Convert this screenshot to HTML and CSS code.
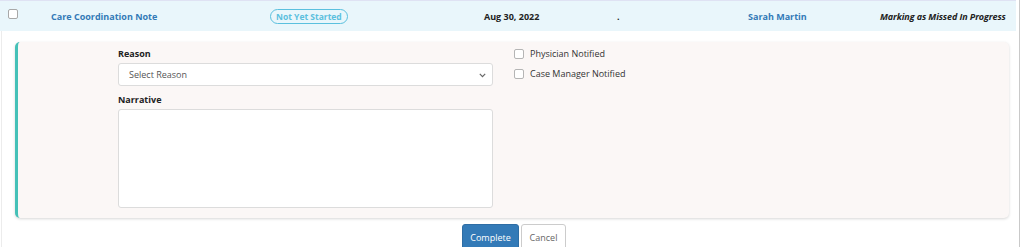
FILE: index.html
```html
<!DOCTYPE html>
<html>
<head>
<meta charset="utf-8">
<link rel="stylesheet" href="styles.css">
</head>
<body>
<div class="page">
  <div class="row">
    <div class="cell cb"><span class="box"></span></div>
    <div class="cell title">Care Coordination Note</div>
    <div class="cell"><span class="badge">Not Yet Started</span></div>
    <div class="cell date">Aug 30, 2022</div>
    <div class="cell dot">.</div>
    <div class="cell name">Sarah Martin</div>
    <div class="cell status">Marking as Missed In Progress</div>
  </div>
  <div class="panel">
    <div class="form">
      <div class="field-col">
        <div class="label">Reason</div>
        <div class="select">
          <span>Select Reason</span>
          <svg class="chev" width="7" height="5" viewBox="0 0 7 5"><path d="M0.8 0.8 L3.5 3.6 L6.2 0.8" fill="none" stroke="#666" stroke-width="1.2"/></svg>
        </div>
        <div class="label narr">Narrative</div>
        <div class="textarea"></div>
      </div>
      <div class="checks">
        <div class="check"><span class="box"></span>Physician Notified</div>
        <div class="check"><span class="box"></span>Case Manager Notified</div>
      </div>
    </div>
  </div>
  <div class="actions">
    <button class="btn primary">Complete</button>
    <button class="btn default">Cancel</button>
  </div>
</div>
</body>
</html>
```
FILE: styles.css
```css
html, body {
  margin: 0;
  padding: 0;
  background: #fff;
  font-family: "Open Sans", "Noto Sans", sans-serif;
  font-size: 9px;
  color: #333;
  overflow: hidden;
}
.page {
  width: 1020px;
  height: 247px;
  box-sizing: border-box;
  border-right: 1px solid #c9c9c9;
  position: relative;
}
.page::before {
  content: "";
  position: absolute;
  left: 1px;
  top: 31px;
  bottom: 0;
  width: 1px;
  background: #ececec;
}
.row {
  height: 31px;
  box-sizing: border-box;
  margin-right: 3px;
  background: #e9f6fb;
  border-top: 1px solid #dfe2f3;
  display: grid;
  grid-template-columns: 51px 219px 214px 133px 131px 132px 1fr;
  align-items: center;
}
.cell {
  white-space: nowrap;
}
.cb {
  padding-left: 8px;
  display: flex;
  align-items: center;
  margin-top: -4px;
}
.box {
  display: inline-block;
  width: 10px;
  height: 10px;
  box-sizing: border-box;
  border: 1px solid #a8a8a8;
  border-radius: 2px;
  background: #fff;
  flex: none;
}
.title, .name {
  color: #337ab7;
  font-weight: 700;
}
.badge {
  display: inline-block;
  border: 1px solid #5bc0de;
  color: #5bc0de;
  border-radius: 8px;
  font-size: 8.5px;
  font-weight: 700;
  padding: 0 5px;
  line-height: 13px;
}
.date {
  font-weight: 700;
  color: #222;
}
.dot {
  color: #222;
  font-weight: 700;
}
.status {
  font-weight: 700;
  font-style: italic;
  color: #222;
  letter-spacing: -0.1px;
}
.panel {
  margin: 11px 0 0 15px;
  width: 994px;
  height: 176px;
  box-sizing: border-box;
  background: #fbf7f6;
  border-left: 3px solid #45c1b8;
  border-radius: 5px;
  box-shadow: 0 1px 3px rgba(0, 0, 0, 0.16);
}
.form {
  display: flex;
  gap: 21px;
  padding: 5px 0 0 100px;
}
.field-col {
  width: 375px;
}
.label {
  font-weight: 700;
  color: #222;
  line-height: 13px;
  margin-bottom: 3px;
}
.narr {
  margin-top: 7px;
  margin-bottom: 3px;
}
.select {
  height: 23px;
  box-sizing: border-box;
  background: #fff;
  border: 1px solid #dcdcdc;
  border-radius: 3px;
  display: flex;
  align-items: center;
  justify-content: space-between;
  padding: 0 6px 0 10px;
  color: #555;
}
.chev {
  margin-top: 1px;
}
.textarea {
  height: 99px;
  box-sizing: border-box;
  background: #fff;
  border: 1px solid #dcdcdc;
  border-radius: 3px;
}
.checks {
  display: flex;
  flex-direction: column;
  gap: 7px;
}
.check {
  display: flex;
  align-items: center;
  gap: 6px;
  line-height: 13px;
  color: #333;
}
.check .box {
  border-color: #b5b5b5;
}
.actions {
  display: flex;
  justify-content: center;
  gap: 2px;
  margin-top: 6px;
  padding-left: 9px;
}
.btn {
  font-family: "Open Sans", "Noto Sans", sans-serif;
  font-size: 9px;
  height: 26px;
  border-radius: 3px;
  padding: 0;
  cursor: pointer;
}
.primary {
  background: #337ab7;
  color: #fff;
  border: 1px solid #2e6da4;
  width: 57px;
}
.default {
  background: #fff;
  color: #666;
  border: 1px solid #ccc;
  width: 45px;
}
```
